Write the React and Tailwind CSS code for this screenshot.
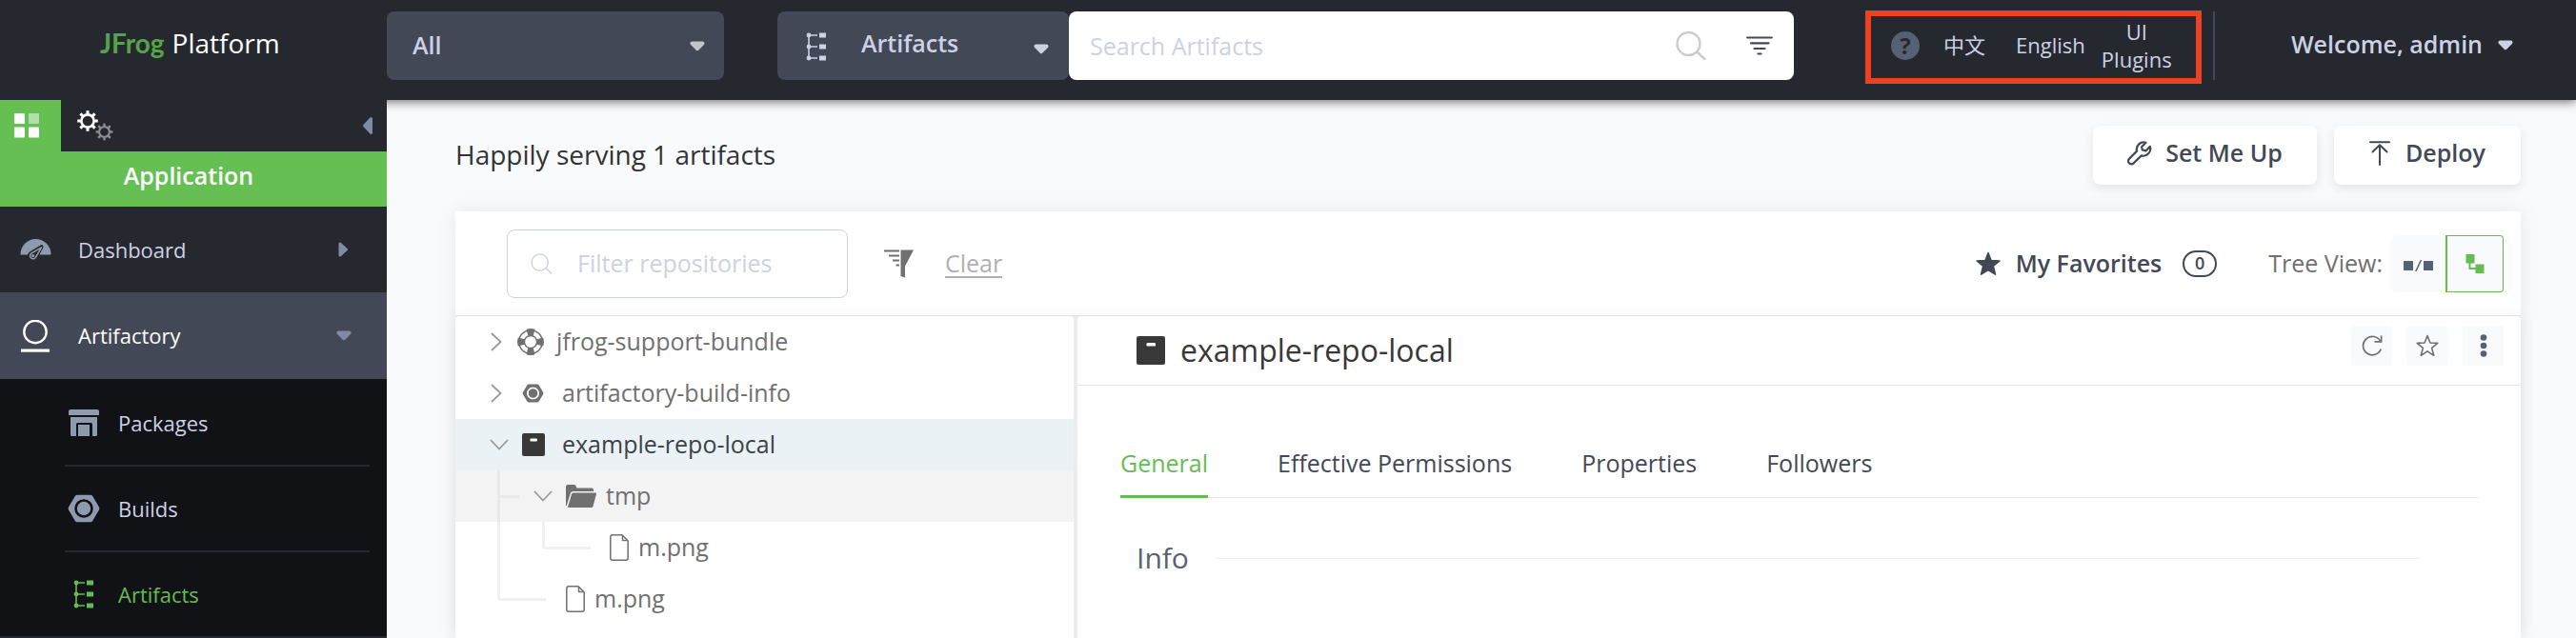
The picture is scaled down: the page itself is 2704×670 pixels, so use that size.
import React from "react";

function Caret({ className = "" }) {
  return (
    <svg viewBox="0 0 16 11" className={"w-4 h-[11px] pointer-events-none " + className} fill="currentColor" stroke="currentColor" strokeWidth="4" strokeLinejoin="round" aria-hidden="true">
      <path d="M2.5 2.5 H13.5 L8 8.2 Z" />
    </svg>
  );
}

function TreeIcon({ className = "" }) {
  return (
    <svg viewBox="0 0 22 30" className={"w-[22px] h-[30px] pointer-events-none " + className} fill="currentColor" stroke="none" aria-hidden="true">
      <path d="M2.2 2.5h1.6v25H2.2z M3 2.3h9v1.4H3z M3 14.3h9v1.4H3z M3 26.3h9v1.4H3z" />
      <circle cx="3" cy="3" r="2.4" />
      <circle cx="3" cy="15" r="2.4" />
      <circle cx="3" cy="27" r="2.4" />
      <path d="M14 0.5h7v5h-7z M14 12.5h7v5h-7z M14 24.5h7v5h-7z" />
    </svg>
  );
}

function Magnifier({ className = "", width = 2 }) {
  return (
    <svg viewBox="0 0 32 30" className={className} fill="none" stroke="currentColor" strokeWidth={width} strokeLinecap="round" aria-hidden="true">
      <circle cx="13.5" cy="13" r="12" />
      <path d="M22.3 21.5 L30.5 29" />
    </svg>
  );
}

const TEETH = [0, 45, 90, 135, 180, 225, 270, 315];

function Gear({ cx, cy, scale }) {
  return (
    <g transform={`translate(${cx} ${cy}) scale(${scale})`} fill="none" stroke="currentColor">
      <circle r="6.6" strokeWidth="2.6" />
      {TEETH.map((a) => (
        <path key={a} d="M0 -7.2 V-10.8" strokeWidth="3" transform={`rotate(${a})`} />
      ))}
    </g>
  );
}

function GearsIcon() {
  return (
    <svg viewBox="0 0 38 32" className="w-[38px] h-8 text-white" aria-hidden="true">
      <Gear cx={11} cy={11} scale={1} />
      <g className="text-[#8d8d91]">
        <Gear cx={28.5} cy={22.5} scale={0.82} />
      </g>
    </svg>
  );
}

function RepoIcon({ className = "" }) {
  return (
    <svg viewBox="0 0 30 30" className={className} aria-hidden="true">
      <rect width="30" height="30" rx="2.5" fill="#383838" />
      <rect x="10.5" y="7" width="9.5" height="3.6" rx="1.2" fill="#fff" />
    </svg>
  );
}

function NutIcon({ className = "", hole }) {
  return (
    <svg viewBox="0 0 34 30" className={className} aria-hidden="true">
      <path d="M10 0.8 H24 Q25.4 0.8 26.2 2.1 L33 13.6 Q33.7 15 33 16.4 L26.2 27.9 Q25.4 29.2 24 29.2 H10 Q8.6 29.2 7.8 27.9 L1 16.4 Q0.3 15 1 13.6 L7.8 2.1 Q8.6 0.8 10 0.8 Z" fill="currentColor" />
      <circle cx="17" cy="15" r="8.5" fill="currentColor" stroke={hole} strokeWidth="2.6" />
    </svg>
  );
}

function DashboardIcon() {
  return (
    <svg viewBox="0 0 33 24" className="w-[33px] h-6" aria-hidden="true">
      <path d="M0.5 17 A16 16 0 0 1 32.5 17 Q32.5 17.5 32 17.5 H1 Q0.5 17.5 0.5 17 Z" fill="#8e9bae" />
      <path d="M22.5 9.2 L16.8 20 A3.6 3.6 0 1 1 11.2 16.2 Z" fill="#8e9bae" stroke="#26282f" strokeWidth="4" strokeLinejoin="round" />
      <path d="M22.5 9.8 L16.6 20 A3.2 3.2 0 1 1 11.4 16.4 Z" fill="#26282f" stroke="#8e9bae" strokeWidth="1.5" strokeLinejoin="round" />
      <circle cx="13.6" cy="18.6" r="1.6" fill="#8e9bae" />
    </svg>
  );
}

function ArtifactoryIcon() {
  return (
    <svg viewBox="0 0 30 34" className="w-[30px] h-[34px]" aria-hidden="true">
      <circle cx="15" cy="12.5" r="11.7" fill="none" stroke="#fff" strokeWidth="2.4" />
      <rect x="0" y="30.5" width="30" height="3.2" fill="#fff" />
    </svg>
  );
}

function PackagesIcon() {
  return (
    <svg viewBox="0 0 32 28" className="w-8 h-7" fill="#8e9bae" aria-hidden="true">
      <path d="M2 0 H30 Q32 0 32 2 V6 H0 V2 Q0 0 2 0 Z" />
      <path d="M2 8 H30 V26.5 Q30 28 28.5 28 H25 V15.5 Q25 14 23.5 14 H9.5 Q8 14 8 15.5 V28 H3.5 Q2 28 2 26.5 Z" />
      <path d="M10 16 H22 V28 H10 Z" />
    </svg>
  );
}

function LifebuoyIcon() {
  return (
    <svg viewBox="0 0 30 30" className="w-[30px] h-[30px] text-[#707070]" fill="none" stroke="currentColor" aria-hidden="true">
      <circle cx="15" cy="15" r="12.3" strokeWidth="1.5" />
      <circle cx="15" cy="15" r="6.6" strokeWidth="1.5" />
      {[0, 90, 180, 270].map((a) => (
        <path key={a} d="M10.5 1.8 Q15 0 19.5 1.8 L17.8 8.6 Q15 7.5 12.2 8.6 Z" fill="currentColor" stroke="none" transform={`rotate(${a} 15 15)`} />
      ))}
    </svg>
  );
}

function FolderIcon() {
  return (
    <svg viewBox="0 0 32 24" className="w-8 h-6" fill="#707070" aria-hidden="true">
      <path d="M0 22 V2 Q0 0 2 0 H8.5 Q10 0 10.5 1.2 L11.5 3.6 H27 Q29 3.6 29 5.6 V7 H7.5 Q5.5 7 4.9 8.8 L0.8 22 Z" />
      <path d="M7.8 8.6 H31 Q32.3 8.6 31.9 9.9 L28.6 22.4 Q28.2 24 26.6 24 H3 Q1.8 24 2.2 22.7 L6 10 Q6.4 8.6 7.8 8.6 Z" />
    </svg>
  );
}

function FileIcon() {
  return (
    <svg viewBox="0 0 20 28" className="w-5 h-7" fill="none" stroke="#707070" strokeWidth="1.5" strokeLinejoin="round" aria-hidden="true">
      <path d="M3 0.8 H13 L19.2 7 V25 Q19.2 27.2 17 27.2 H3 Q0.8 27.2 0.8 25 V3 Q0.8 0.8 3 0.8 Z" />
      <path d="M13.5 1.2 V6.6 H18.8" />
    </svg>
  );
}

function Chevron({ open }) {
  return (
    <svg viewBox="0 0 20 20" className="w-5 h-5 text-[#9a9a9a]" fill="none" stroke="currentColor" strokeWidth="1.8" aria-hidden="true">
      {open ? <path d="M1 5 L10 14.5 L19 5" /> : <path d="M2 1 L11.5 10 L2 19" />}
    </svg>
  );
}

function TopBar() {
  return (
    <header className="relative z-10 flex h-[105px] bg-[#26282f] text-[#cdd1e4] shadow-[0_2px_10px_rgba(0,0,0,0.55)]">
      <a href="#home" className="flex w-[406px] shrink-0 items-center gap-2 pb-4 pl-[105px] text-[28px]">
        <span className="font-['Lato'] font-bold text-[#55a548]">JFrog</span>
        <span className="text-white">Platform</span>
      </a>
      <div className="flex flex-1 items-start pt-3">
        <div className="relative w-[354px] shrink-0">
          <select aria-label="Project" className="h-[72px] w-full appearance-none rounded-lg bg-[#434856] pl-[27px] font-semibold">
            <option>All</option>
          </select>
          <Caret className="absolute right-5 top-[31px] text-[#c3c5cc]" />
        </div>
        <div className="relative ml-14 w-[306px] shrink-0">
          <select aria-label="Search type" className="h-[72px] w-full appearance-none rounded-lg bg-[#434856] pb-1 pl-[88px] font-semibold">
            <option>Artifacts</option>
          </select>
          <TreeIcon className="absolute left-[30px] top-[22px]" />
          <Caret className="absolute right-[21px] top-[34px]" />
        </div>
        <form className="flex h-[72px] flex-1 items-center rounded-lg bg-white">
          <input aria-label="Search Artifacts" placeholder="Search Artifacts" className="h-full min-w-0 flex-1 rounded-lg pl-[22px] text-gray-800 outline-none placeholder:text-[#cdd1e4]" />
          <button type="button" aria-label="Search" className="pr-[42px]">
            <Magnifier className="h-[30px] w-8 text-[#cbcbcb]" width={2.4} />
          </button>
          <button type="button" aria-label="Search filters" className="pr-[22px]">
            <svg viewBox="0 0 28 20" className="h-5 w-7" stroke="#434856" strokeWidth="2.2" strokeLinecap="round" aria-hidden="true">
              <path d="M1.2 1.5H26.8 M5 7.3H23.5 M8.5 13H19.5 M12.5 18.5H15.5" />
            </svg>
          </button>
        </form>
        <nav className="-mt-px ml-[75px] flex h-[77px] w-[353px] shrink-0 items-center border-6 border-[#ee4023] pb-1 pl-[21px] text-[22px] leading-[29px]">
          <button type="button" aria-label="Help" className="flex h-[30px] w-[30px] items-center justify-center rounded-full bg-[#566273] text-[24px] font-bold text-[#26282f]">?</button>
          <a href="#zh" className="ml-[25px]">中文</a>
          <a href="#en" className="ml-8">English</a>
          <a href="#plugins" className="ml-4 w-[76px] text-center">UI Plugins</a>
        </nav>
        <div className="ml-3 h-[72px] w-0.5 shrink-0 bg-[#434856]" />
        <button type="button" className="ml-20 mr-[66px] flex h-[70px] shrink-0 items-center gap-4 whitespace-nowrap font-semibold">
          Welcome, admin
          <Caret />
        </button>
      </div>
    </header>
  );
}

function SubItem({ icon, label, active, last }) {
  return (
    <li className={last ? "" : "border-b-2 border-[#23292f]"}>
      <a href={"#" + label.toLowerCase()} className={"flex h-[88px] items-center " + (active ? "text-[#65bd51]" : "text-[#cdd1e4]")}>
        <span className="mr-4 flex w-10 justify-center">{icon}</span>
        {label}
      </a>
    </li>
  );
}

function Sidebar() {
  return (
    <aside className="relative z-20 w-[406px] shrink-0 bg-[#26282f] text-[22px]">
      <div className="flex h-[54px] items-stretch">
        <button type="button" aria-label="Application" className="flex w-16 items-center bg-[#65bf53] pl-[15px]">
          <svg viewBox="0 0 26 26" className="h-[26px] w-[26px]" fill="#fff" aria-hidden="true">
            <rect width="11" height="11" rx="1" />
            <rect x="15" width="11" height="11" rx="1" opacity="0.5" />
            <rect y="14.5" width="11" height="11" rx="1" />
            <rect x="15" y="14.5" width="11" height="11" rx="1" />
          </svg>
        </button>
        <button type="button" aria-label="Administration" className="flex items-center pl-[17px]">
          <GearsIcon />
        </button>
        <button type="button" aria-label="Collapse menu" className="ml-auto pr-3.5 text-[#7d8ba5]">
          <svg viewBox="0 0 12 20" className="h-5 w-3" fill="currentColor" stroke="currentColor" strokeWidth="3" strokeLinejoin="round" aria-hidden="true">
            <path d="M9.5 2.5 V17.5 L2.5 10 Z" />
          </svg>
        </button>
      </div>
      <div className="flex h-[58px] items-center justify-center bg-[#65bf53] pb-1.5 pr-2.5 text-[25px] font-semibold text-white">Application</div>
      <nav>
        <a href="#dashboard" className="flex h-[90px] items-center pl-[21px] pr-10 text-[#cdd1e4]">
          <span className="w-[61px]"><DashboardIcon /></span>
          Dashboard
          <svg viewBox="0 0 11 16" className="ml-auto h-4 w-[11px] text-[#7d8ba5]" fill="currentColor" stroke="currentColor" strokeWidth="3" strokeLinejoin="round" aria-hidden="true">
            <path d="M2 2 V14 L8.5 8 Z" />
          </svg>
        </a>
        <a href="#artifactory" className="flex h-[91px] items-center bg-[#434856] pl-[22px] pr-[37px] text-white">
          <span className="w-[60px]"><ArtifactoryIcon /></span>
          Artifactory
          <Caret className="ml-auto text-[#7d8ba5]" />
        </a>
        <ul className="border-b border-[#26282f] bg-[#111216] pl-[68px] pr-[18px] pt-0.5">
          <SubItem icon={<PackagesIcon />} label="Packages" />
          <SubItem icon={<NutIcon className="h-[30px] w-[34px] text-[#8e9bae]" hole="#111216" />} label="Builds" />
          <SubItem icon={<TreeIcon />} label="Artifacts" active last />
        </ul>
      </nav>
    </aside>
  );
}

function TreeRow({ chevron, icon, label, indent, rowClass = "", labelClass = "", children }) {
  return (
    <li className={"relative flex h-[54px] items-center whitespace-nowrap text-[#707070] " + rowClass}>
      {children}
      <button type="button" className={"flex h-full items-center text-left " + indent}>
        {chevron}
        {icon}
        <span className={labelClass}>{label}</span>
      </button>
    </li>
  );
}

function RepoTree() {
  return (
    <ul className="w-[30%] max-w-[649px] shrink-0 rounded-t bg-white">
      <TreeRow indent="pl-9" chevron={<Chevron />} icon={<span className="ml-2"><LifebuoyIcon /></span>} label="jfrog-support-bundle" labelClass="ml-3" />
      <TreeRow indent="pl-9" chevron={<Chevron />} icon={<span className="ml-3.5 flex w-[30px]"><NutIcon className="h-5 w-[23px] text-[#707070]" hole="#fff" /></span>} label="artifactory-build-info" labelClass="ml-3" />
      <TreeRow rowClass="bg-[#eaf2f6]" indent="pl-9" chevron={<Chevron open />} icon={<span className="ml-3.5 flex w-[30px]"><RepoIcon className="h-6 w-6" /></span>} label="example-repo-local" labelClass="ml-3 text-[#3b4248]" />
      <TreeRow rowClass="bg-[#f3f3f3]" indent="pl-[82px]" chevron={<Chevron open />} icon={<span className="ml-3.5"><FolderIcon /></span>} label="tmp" labelClass="ml-2.5">
        <span className="absolute left-11 top-0 h-full w-[3px] bg-[#e8e8e8]" />
        <span className="absolute left-[47px] top-[26px] h-[3px] w-5 bg-[#e8e8e8]" />
      </TreeRow>
      <TreeRow indent="pl-[162px]" icon={<FileIcon />} label="m.png" labelClass="ml-2.5">
        <span className="absolute left-11 top-0 h-full w-[3px] bg-[#f0f0f0]" />
        <span className="absolute left-[91px] top-0 h-[29px] w-[51px] rounded-bl-sm border-b-3 border-l-3 border-[#f0f0f0]" />
      </TreeRow>
      <TreeRow indent="pl-[116px]" icon={<FileIcon />} label="m.png" labelClass="ml-2.5">
        <span className="absolute left-11 top-0 h-[29px] w-[51px] rounded-bl-sm border-b-3 border-l-3 border-[#f0f0f0]" />
      </TreeRow>
    </ul>
  );
}

function Detail() {
  const tabs = ["General", "Effective Permissions", "Properties", "Followers"];
  return (
    <section className="ml-1 flex-1 rounded-t bg-white">
      <div className="flex h-[73px] items-center border-b border-[#e6e6e6] pl-[62px] pr-[18px]">
        <RepoIcon className="h-[30px] w-[30px]" />
        <h2 className="ml-4 text-[32px] text-[#383838]">example-repo-local</h2>
        <div className="ml-auto flex gap-[15px] pb-2.5">
          <button type="button" aria-label="Refresh" className="flex h-[42px] w-[43px] items-center justify-center rounded bg-[#f9fafc]">
            <svg viewBox="0 0 22 22" className="h-[22px] w-[22px]" fill="none" stroke="#707070" strokeWidth="1.7" aria-hidden="true">
              <path d="M20.3 14.5 A9.7 9.7 0 1 1 19.8 6.5" />
              <path d="M20.6 0.5 V6.8 H13.5" />
            </svg>
          </button>
          <button type="button" aria-label="Add to favorites" className="flex h-[42px] w-11 items-center justify-center rounded bg-[#f9fafc]">
            <svg viewBox="0 0 24 24" className="h-6 w-6" fill="none" stroke="#707070" strokeWidth="1.6" strokeLinejoin="round" aria-hidden="true">
              <path d="M12 1.5 L14.9 9 L22.8 9.4 L16.6 14.4 L18.7 22.3 L12 17.8 L5.3 22.3 L7.4 14.4 L1.2 9.4 L9.1 9 Z" />
            </svg>
          </button>
          <button type="button" aria-label="More actions" className="flex h-[42px] w-[43px] items-center justify-center bg-[#f9fafc]">
            <svg viewBox="0 0 8 24" className="h-6 w-2" fill="#566273" aria-hidden="true">
              <circle cx="4" cy="3.5" r="3.3" />
              <circle cx="4" cy="12" r="3.3" />
              <circle cx="4" cy="20.5" r="3.3" />
            </svg>
          </button>
        </div>
      </div>
      <div className="mx-[45px] mt-16 flex gap-[73px] whitespace-nowrap border-b border-[#e6e6e6] leading-[34px]">
        {tabs.map((t, i) => (
          <button
            key={t}
            type="button"
            className={"-mb-px border-b-3 pb-[17px] " + (i === 0 ? "border-[#65bd51] text-[#65bd51]" : "border-transparent text-[#434856]")}
          >
            {t}
          </button>
        ))}
      </div>
      <div className="mt-[43px] flex items-center gap-7 pl-[62px] pr-[106px]">
        <h3 className="text-[30px] leading-10 text-[#566273]">Info</h3>
        <div className="h-px flex-1 bg-[#f0f1f6]" />
      </div>
    </section>
  );
}

function Toolbar() {
  return (
    <div className="flex h-[110px] items-center border-b border-[#e6e6e6] pl-[54px] pr-[18px]">
      <label className="flex h-[72px] w-[358px] items-center rounded-lg border border-[#cdd1e4] pl-6">
        <Magnifier className="h-[22px] w-[23px] text-[#cdd1e4]" width={2} />
        <input aria-label="Filter repositories" placeholder="Filter repositories" className="ml-[26px] min-w-0 flex-1 outline-none placeholder:text-[#cdd1e4]" />
      </label>
      <button type="button" aria-label="Filter options" className="ml-[38px]">
        <svg viewBox="0 0 31 30" className="h-[30px] w-[31px]" fill="#707070" aria-hidden="true">
          <path d="M0 0.5H16V2.5H0Z M5 5.5H16V7.5H5Z M9 10.5H16V12.5H9Z M12.5 15.5H16V17.5H12.5Z" />
          <path d="M17.5 0.5H31L22 17.5V29.5L17.5 28Z" />
        </svg>
      </button>
      <button type="button" className="ml-[33px] border-b-2 border-[#b0b0b0] leading-7 text-[#b0b0b0]">Clear</button>
      <button type="button" className="ml-auto flex items-center font-semibold text-[#434856]">
        <svg viewBox="0 0 26 26" className="mr-4 h-[26px] w-[26px]" fill="currentColor" stroke="currentColor" strokeWidth="1.5" strokeLinejoin="round" aria-hidden="true">
          <path d="M13 1.5 L16.1 9.4 L25 9.9 L18.3 15.3 L20.5 24.2 L13 19.5 L5.5 24.2 L7.7 15.3 L1 9.9 L9.9 9.4 Z" />
        </svg>
        My Favorites
        <span className="ml-[22px] flex h-7 w-9 items-center justify-center rounded-full border-2 border-[#434856] text-[18px]">0</span>
      </button>
      <span className="ml-[54px] text-[#707070]">Tree View:</span>
      <div className="ml-2 flex h-[60px]">
        <button type="button" aria-label="Compact view" className="flex w-[58px] items-center justify-center rounded-l-lg bg-[#f9fafc]">
          <svg viewBox="0 0 31 12" className="mt-1 h-3 w-[31px]" fill="#566273" aria-hidden="true">
            <path d="M0 1H10V11H0Z M21 1H31V11H21Z" />
            <path d="M17.6 0H19.2L13.6 12H12Z" />
          </svg>
        </button>
        <button type="button" aria-label="Tree view" className="flex w-[61px] items-center justify-center rounded-r border border-l-2 border-[#65bd51] bg-[#f9fafc]">
          <svg viewBox="0 0 20 20" className="h-5 w-5" fill="#65bd51" aria-hidden="true">
            <path d="M0.5 0H9.5V9.5H0.5Z M10.5 10.5H19.5V20H10.5Z M3.5 9.5H5.5V14H10.5V16H3.5Z" />
          </svg>
        </button>
      </div>
    </div>
  );
}

export default function App() {
  return (
    <div className="flex min-h-screen flex-col bg-[#f9fafc] font-['Open_Sans','Noto_Sans_CJK_SC',sans-serif] text-[25px]">
      <TopBar />
      <div className="flex flex-1 items-stretch">
        <Sidebar />
        <main className="flex min-w-0 flex-1 flex-col pl-[72px] pr-[58px] pt-[27px]">
          <div className="mb-7 flex h-[62px] items-center justify-between">
            <h1 className="pb-0.5 text-[28px] text-[#333]">Happily serving 1 artifacts</h1>
            <div className="flex h-full gap-[18px] font-semibold text-[#434856]">
              <button type="button" className="flex w-[235px] items-center justify-center gap-3.5 rounded-lg bg-white pb-1 shadow-[0_4px_12px_rgba(0,0,0,0.09)]">
                <svg viewBox="0 0 24 24" className="h-[26px] w-[26px]" fill="none" stroke="currentColor" strokeWidth="2" strokeLinecap="round" strokeLinejoin="round" aria-hidden="true">
                  <path d="M18 1.6 A6.8 6.8 0 0 0 9.3 9.8 L1.9 17.2 A2.9 2.9 0 0 0 6.1 21.6 L13.7 14.2 A6.8 6.8 0 0 0 22 5.4 L18 9.6 L14.6 8.8 L13.9 5.7 Z" />
                </svg>
                Set Me Up
              </button>
              <button type="button" className="flex w-[196px] items-center justify-center gap-4 rounded-lg bg-white pb-1 shadow-[0_4px_12px_rgba(0,0,0,0.09)]">
                <svg viewBox="0 0 22 26" className="h-[26px] w-[22px]" fill="none" stroke="currentColor" strokeWidth="2" strokeLinecap="round" strokeLinejoin="round" aria-hidden="true">
                  <path d="M1 1.2 H21" />
                  <path d="M11 25 V4.5 M3.5 11.5 L11 4.2 L18.5 11.5" />
                </svg>
                Deploy
              </button>
            </div>
          </div>
          <div className="flex flex-1 flex-col bg-white shadow-[0_0_20px_rgba(0,0,0,0.08)]">
            <Toolbar />
            <div className="flex flex-1 bg-[#ededed] shadow-[0_0_16px_rgba(0,0,0,0.05)]">
              <RepoTree />
              <Detail />
            </div>
          </div>
        </main>
      </div>
    </div>
  );
}
